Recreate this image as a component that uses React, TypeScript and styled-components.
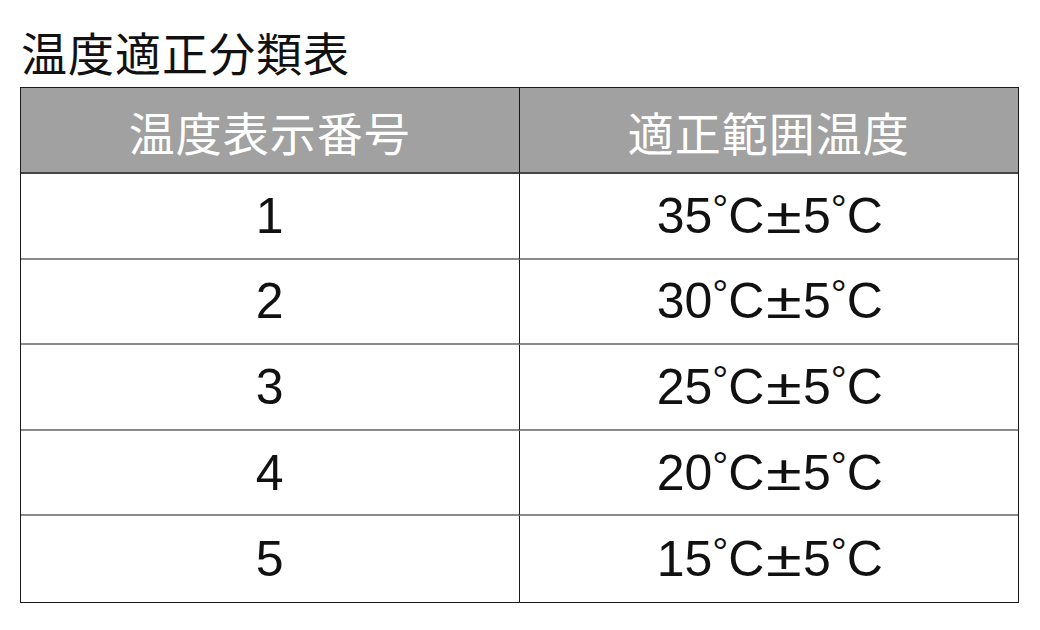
import React from 'react';
import styled, { createGlobalStyle } from 'styled-components';

const GlobalStyle = createGlobalStyle`
	html, body {
		margin: 0;
		padding: 0;
		background: #ffffff;
	}
	body {
		font-family: 'Liberation Sans', 'Noto Sans CJK JP', sans-serif;
		color: #111111;
	}
`;

const Page = styled.div`
	width: 1040px;
	height: 630px;
	padding: 28px 0 0 20px;
	box-sizing: border-box;
`;

const Title = styled.h1`
	margin: 0 0 13px 1px;
	font-family: 'Noto Sans CJK JP', sans-serif;
	font-size: 46px;
	font-weight: 400;
	line-height: 46px;
	letter-spacing: 1px;
	color: #111111;
`;

const Table = styled.div`
	display: grid;
	grid-template-columns: 1fr 1fr;
	grid-template-rows: 86px repeat(5, 85.6px);
	width: 999px;
	border: 1.5px solid #1a1a1a;
	box-sizing: border-box;
`;

const Cell = styled.div<{ $head?: boolean; $first?: boolean; $last?: boolean }>`
	display: flex;
	align-items: center;
	justify-content: center;
	background: ${(p) => (p.$head ? '#a0a1a0' : '#ffffff')};
	color: ${(p) => (p.$head ? '#ffffff' : '#111111')};
	font-family: ${(p) =>
		p.$head ? "'Noto Sans CJK JP', sans-serif" : "'Liberation Sans', 'Noto Sans CJK JP', sans-serif"};
	font-size: ${(p) => (p.$head ? '46px' : '50px')};
	font-weight: 400;
	letter-spacing: ${(p) => (p.$head ? '1px' : '0')};
	padding-top: ${(p) => (p.$head ? '2px' : '0')};
	border-right: ${(p) => (p.$first ? '1.5px solid #1a1a1a' : 'none')};
	border-bottom: ${(p) =>
		p.$last ? 'none' : p.$head ? '2px solid #444444' : '2px solid #8a8a8a'};
	box-sizing: border-box;
`;

const Range = styled.span`
	white-space: nowrap;
	padding-left: 2px;
`;

const Deg = styled.span`
	position: relative;
	top: -10px;
	font-size: 40px;
`;

const PlusMinus = styled.span`
	display: inline-block;
	margin: 0 5px 0 6px;
	transform: scaleX(1.3);
`;

function Celsius() {
	return (
		<>
			<Deg>°</Deg>C
		</>
	);
}

const rows = [
	{ no: '1', low: '35' },
	{ no: '2', low: '30' },
	{ no: '3', low: '25' },
	{ no: '4', low: '20' },
	{ no: '5', low: '15' },
];

function App() {
	return (
		<Page>
			<GlobalStyle />
			<Title>温度適正分類表</Title>
			<Table>
				<Cell $head $first>温度表示番号</Cell>
				<Cell $head>適正範囲温度</Cell>
				{rows.map((r, i) => (
					<React.Fragment key={r.no}>
						<Cell $first $last={i === rows.length - 1}>{r.no}</Cell>
						<Cell $last={i === rows.length - 1}>
							<Range>
								{r.low}
								<Celsius />
								<PlusMinus>±</PlusMinus>5
								<Celsius />
							</Range>
						</Cell>
					</React.Fragment>
				))}
			</Table>
		</Page>
	);
}

export default App;
